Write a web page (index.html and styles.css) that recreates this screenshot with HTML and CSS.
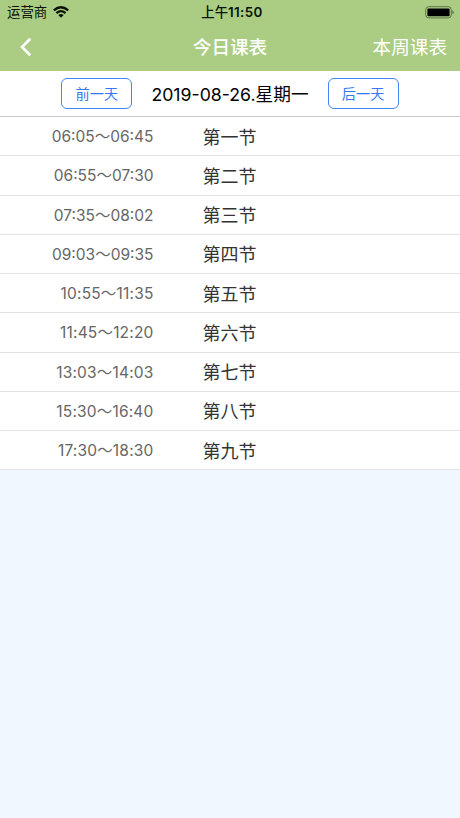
FILE: index.html
```html
<!DOCTYPE html>
<html lang="zh-CN">
<head>
<meta charset="utf-8">
<meta name="viewport" content="width=device-width, initial-scale=1">
<title>今日课表</title>
<link rel="stylesheet" href="styles.css">
</head>
<body>
<header class="top">
  <div class="status">
    <div class="carrier"><span>运营商</span>
      <svg class="wifi" width="16" height="12" viewBox="0 0 16 12" fill="none" stroke="#0a1206" stroke-width="2.3"><path d="M.8 4.3Q8-1.8 15.2 4.3M3.4 7.1Q8 3.2 12.6 7.1"/><path d="M8 11.7L5.3 9Q8 6.9 10.7 9Z" fill="#0a1206" stroke="none"/></svg>
    </div>
    <div class="clock"><span class="ampm">上午</span>11:50</div>
    <svg class="battery" width="30" height="13" viewBox="0 0 30 13"><rect x=".7" y=".7" width="25.6" height="11.2" rx="3" fill="none" stroke="#5d7347"/><rect x="2.4" y="2.4" width="22.2" height="7.8" rx="1" fill="#000"/><path d="M27.4 4.4q1.5.5 1.5 1.9t-1.5 1.9z" fill="#5d7347"/></svg>
  </div>
  <nav class="nav">
    <svg class="back" width="12" height="20" viewBox="0 0 12 20" fill="none" stroke="#fff" stroke-width="2.7"><path d="M10.3 1.7L2 10L10.3 18.3"/></svg>
    <h1 class="title">今日课表</h1>
    <div class="week">本周课表</div>
  </nav>
</header>
<section class="daybar">
  <button class="day">前一天</button>
  <div class="date">2019-08-26.星期一</div>
  <button class="day">后一天</button>
</section>
<main class="list">
  <div class="row"><span class="time">06:05～06:45</span><span class="name">第一节</span></div>
  <div class="row"><span class="time">06:55～07:30</span><span class="name">第二节</span></div>
  <div class="row"><span class="time">07:35～08:02</span><span class="name">第三节</span></div>
  <div class="row"><span class="time">09:03～09:35</span><span class="name">第四节</span></div>
  <div class="row"><span class="time loose">10:55～11:35</span><span class="name">第五节</span></div>
  <div class="row"><span class="time loose">11:45～12:20</span><span class="name">第六节</span></div>
  <div class="row"><span class="time loose">13:03～14:03</span><span class="name">第七节</span></div>
  <div class="row"><span class="time loose">15:30～16:40</span><span class="name">第八节</span></div>
  <div class="row"><span class="time loose">17:30～18:30</span><span class="name">第九节</span></div>
</main>
</body>
</html>
```
FILE: styles.css
```css
* { box-sizing: border-box; }
body {
  margin: 0;
  min-height: 100vh;
  background: #f0f7ff;
  font-family: Inter, "Noto Sans CJK SC", sans-serif;
  color: #000;
}
.top { height: 71px; background: #abcd83; }
.status {
  height: 24px;
  display: grid;
  grid-template-columns: 1fr auto 1fr;
  align-items: center;
  padding: 0 5px 0 7px;
  font-size: 13.4px;
  line-height: 24px;
  color: #0a1206;
}
.carrier { display: flex; align-items: center; gap: 6px; }
.clock { padding-left: 2px; font-weight: 600; letter-spacing: .35px; }
.ampm { font-weight: 500; letter-spacing: 0; }
.battery { justify-self: end; }
.nav {
  height: 47px;
  display: grid;
  grid-template-columns: 1fr auto 1fr;
  align-items: center;
  padding: 0 13px 1px;
  color: #fff;
  font-size: 18.6px;
  line-height: 46px;
}
.back { margin-left: 7px; }
.title { margin: 0; font-size: 18.6px; font-weight: 500; }
.week { justify-self: end; }
.daybar {
  height: 46px;
  display: flex;
  align-items: center;
  justify-content: center;
  gap: 19px;
  background: #fff;
  border-bottom: 1px solid #c9c9c9;
}
.day {
  width: 71px;
  height: 31px;
  padding: 0;
  border: 1px solid #4285f4;
  border-radius: 6px;
  background: #fff;
  color: #3478f6;
  font: 14.2px/28px Inter, "Noto Sans CJK SC", sans-serif;
}
.date { padding-top: 2px; font-size: 17.7px; line-height: 43px; white-space: nowrap; }
.list { background: #fff; }
.row {
  height: 39.25px;
  display: grid;
  grid-template-columns: 153.5px 1fr;
  column-gap: 49px;
  align-items: center;
  border-bottom: 1px solid #e3e3e3;
}
.time { justify-self: end; padding-top: 2px; font-size: 15.5px; line-height: 36px; color: #666; white-space: nowrap; }
.loose { letter-spacing: .18px; }
.name { padding-top: 2px; font-size: 18px; line-height: 35px; color: #333; }
```
